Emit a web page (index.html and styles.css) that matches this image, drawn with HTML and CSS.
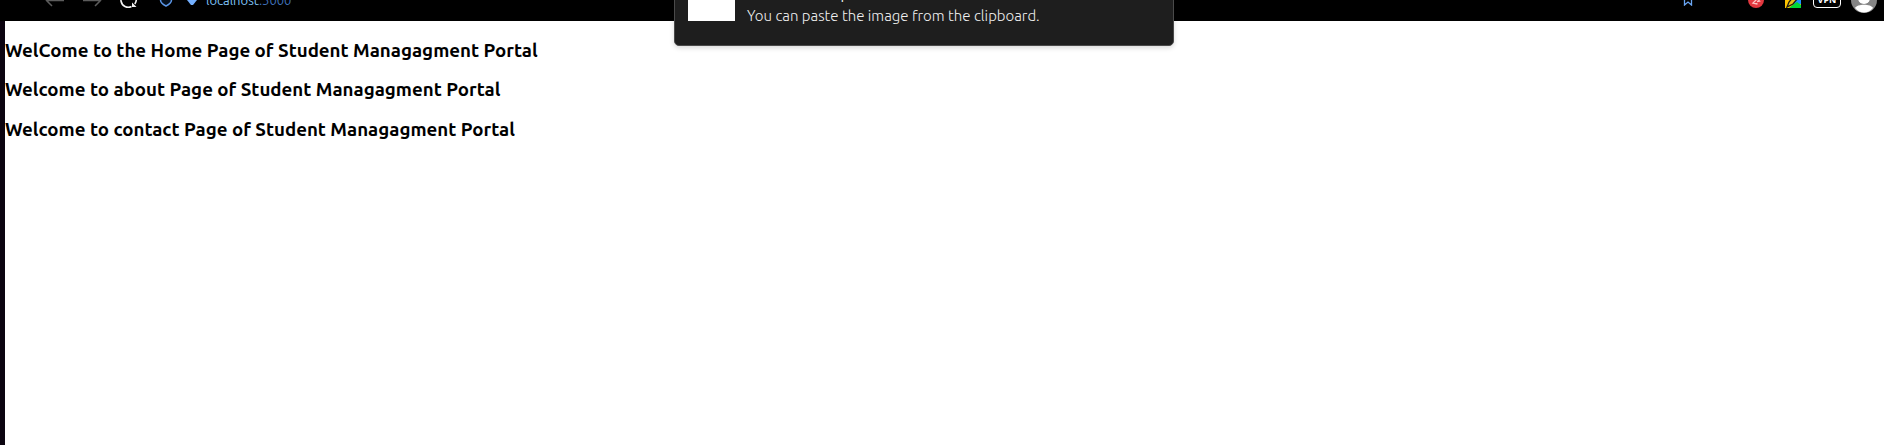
FILE: index.html
```
<!DOCTYPE html>
<html lang="en">
<head>
<meta charset="utf-8">
<title>Student Managagment Portal</title>
<link rel="stylesheet" href="styles.css">
</head>
<body>
<header class="chrome">
  <div class="toolbar">
    <nav class="nav" aria-label="Browser">
      <button class="icon-btn" aria-label="Back"><svg width="20" height="20" viewBox="0 0 20 20" fill="none" stroke="#5c5c5c" stroke-width="1.5"><path d="M19 10.500H2M7 5L1.500 10.500L7 16"/></svg></button>
      <button class="icon-btn" aria-label="Forward"><svg width="20" height="20" viewBox="0 0 20 20" fill="none" stroke="#5c5c5c" stroke-width="1.5"><path d="M1 10.500H18M13 5L18.500 10.500L13 16"/></svg></button>
      <button class="icon-btn" aria-label="Reload"><svg width="20" height="20" viewBox="0 0 20 20" fill="none" stroke="#f4f4f4" stroke-width="1.600"><path d="M10 2.700A7.300 7.300 0 1 0 12.500 16.500"/><path d="M13 12.500V17H17.500Z" fill="#f4f4f4" stroke="none"/><path d="M15.800 14A7.300 7.300 0 0 0 17.300 10"/></svg></button>
    </nav>
    <div class="address">
      <button class="icon-btn" aria-label="Tracking protection"><svg width="14" height="14" viewBox="0 0 14 14" fill="#05101e" stroke="#5b96e6" stroke-width="1.500"><path d="M7 1L12.500 3V7C12.500 9 10 11.500 7 13C4 11.500 1.500 9 1.500 7V3Z"/></svg></button>
      <button class="icon-btn" aria-label="Site information"><svg width="12" height="12" viewBox="0 0 12 12" fill="#74b0ff"><path d="M2 1H10L11 6L7 11H5L1 6Z"/></svg></button>
      <div class="url" role="textbox" aria-label="Address" tabindex="0">localhost<span class="port">:3000</span></div>
    </div>
    <div class="extensions">
      <button class="icon-btn bookmark" aria-label="Bookmark"><svg width="10" height="12" viewBox="0 0 10 12" fill="none" stroke="#6aa5f2" stroke-width="1.300"><path d="M1.500 1H8.500V11L5 8L1.500 11Z"/></svg></button>
      <button class="icon-btn" aria-label="Extension"><svg width="16" height="16" viewBox="0 0 16 16"><circle cx="8" cy="8" r="8" fill="#e2383f"/><path d="M4.500 6L7 5.500L8 8L5 11L9.500 12M8.500 6L11.500 9L9 9.500" fill="none" stroke="#ffc4c4" stroke-width="1.300"/></svg></button>
      <button class="icon-btn" aria-label="Colour picker"><svg width="16" height="16" viewBox="0 0 16 16"><path d="M0 0H16V16H0Z" fill="#ffc400"/><path d="M8 0H16V12H8Z" fill="#1e90ff"/><path d="M4 16L9 12L12 10L16 13V16Z" fill="#00d735"/><path d="M2 15L4 10L10 3L13 6L8 12Z" fill="#e7bf1a" stroke="#1b1b10" stroke-width="1.300"/></svg></button>
      <button class="vpn">VPN</button>
      <button class="icon-btn account" aria-label="Account"><svg width="26" height="26" viewBox="0 0 26 26"><circle cx="13" cy="13" r="13" fill="#858585"/><circle cx="13" cy="11" r="6" fill="#fff"/><path d="M4 21C6 16.500 20 16.500 22 21C17 27 9 27 4 21Z" fill="#fff"/></svg></button>
    </div>
  </div>
</header>
<main class="page">
  <h3>WelCome to the Home Page of Student Managagment Portal</h3>
  <h3>Welcome to about Page of Student Managagment Portal</h3>
  <h3>Welcome to contact Page of Student Managagment Portal</h3>
</main>
<aside class="toast" role="status">
  <div class="thumb"></div>
  <div class="message">
    <strong>Screenshot captured</strong>
    <p>You can paste the image from the clipboard.</p>
  </div>
</aside>
</body>
</html>
```
FILE: styles.css
```
* { box-sizing: border-box; }
body {
  margin: 0;
  min-height: 100vh;
  display: flex;
  flex-direction: column;
  overflow: hidden;
  background: #fff;
  color: #000;
  font-family: Ubuntu, "Noto Sans", sans-serif;
}
.chrome {
  height: 21px;
  display: flex;
  align-items: flex-end;
  overflow: hidden;
  background: #000;
}
.toolbar {
  flex: 1;
  height: 42px;
  display: flex;
  align-items: center;
  padding: 0 7px 0 45px;
}
.nav { display: flex; gap: 17px; }
.address { display: flex; align-items: center; gap: 13px; margin-left: 20px; }
.extensions { display: flex; align-items: center; margin-left: auto; }
.icon-btn {
  display: flex;
  padding: 0;
  border: 0;
  background: none;
}
.extensions .icon-btn { margin-left: 21px; }
.extensions .bookmark { margin: 0 34px 0 0; }
.extensions .account { margin-left: 10px; }
.url {
  margin-left: -5px;
  color: #7fc4f8;
  font-size: 13px;
  line-height: 20px;
}
.port { color: #3f70b8; }
.vpn {
  width: 28px;
  height: 16px;
  margin-left: 12px;
  padding: 0;
  border: 1px solid #fff;
  border-radius: 4px;
  background: #000;
  color: #fff;
  font: bold 9px/14px "Noto Sans", sans-serif;
}
.page {
  flex: 1;
  border-left: 5px solid #0b0410;
}
.toast {
  position: absolute;
  top: -41px;
  left: 674px;
  width: 500px;
  display: flex;
  gap: 12px;
  padding: 14px 13px 19px;
  border: 1px solid #4a4a4a;
  border-radius: 5px;
  background: #1e1e1e;
  box-shadow: 0 2px 5px rgba(0, 0, 0, 0.15);
  color: #f0f0f0;
  font-size: 15px;
  font-weight: 300;
  line-height: 20px;
}
.thumb { width: 47px; height: 47px; background: #fff; }
.message {
  display: flex;
  flex-direction: column;
  justify-content: flex-end;
  gap: 2px;
  padding-top: 10px;
}
.message p { margin: 0; }
```
